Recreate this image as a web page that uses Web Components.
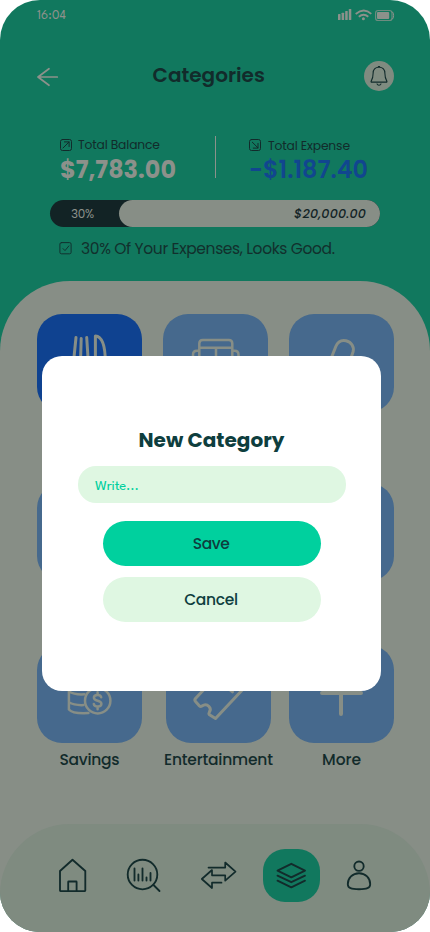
<!DOCTYPE html>
<html lang="en">
<head>
<meta charset="utf-8">
<title>Categories</title>
<style>
html,body{margin:0;background:#fff}
body{width:430px;height:932px;overflow:hidden}
</style>
</head>
<body>
<categories-screen></categories-screen>
<script>
const define = (name, html, setup) => {
  const template = document.createElement('template');
  template.innerHTML = html;
  customElements.define(name, class extends HTMLElement {
    constructor() {
      super();
      this.attachShadow({mode: 'open'}).append(template.content.cloneNode(true));
    }
    connectedCallback() { if (setup) setup(this, this.shadowRoot); }
  });
};

/* One line of text, sized (or with "tracked", letter-spaced) to fill the width given in "w". */
define('fit-text', `<style>
:host{display:block;white-space:nowrap;line-height:20px;height:20px}
span{display:inline-block;vertical-align:top}
</style><span><slot></slot></span>`, (host, root) => {
  const span = root.querySelector('span');
  const target = +host.getAttribute('w');
  host.style.width = target + 'px';
  const natural = span.getBoundingClientRect().width;
  if (host.hasAttribute('tracked')) {
    span.style.letterSpacing = ((target - natural) / (host.textContent.length - 1)).toFixed(3) + 'px';
  } else {
    const size = parseFloat(getComputedStyle(span).fontSize);
    span.style.fontSize = (size * target / natural).toFixed(2) + 'px';
  }
});

const ICONS = {
  signal: ['338 8 14 13', '<g fill="#8c918b" stroke="none"><rect x="338" y="14" width="2.5" height="6" rx=".6"/><rect x="341.6" y="12.7" width="2.5" height="7.3" rx=".6"/><rect x="345.2" y="11" width="2.5" height="9" rx=".6"/><rect x="348.8" y="9" width="2.5" height="11" rx=".6"/></g>'],
  wifi: ['355 8 18 13', '<g stroke="#8c918b" stroke-width="1.9" stroke-linecap="butt"><path d="M355.7 13.9Q364 7.3 371.3 13.9"/><path d="M358.8 16.8Q363.6 12.8 368.3 16.8"/></g><circle cx="363.4" cy="18.7" r="1.5" fill="#8c918b" stroke="none"/>'],
  battery: ['375 9 20 13', '<rect x="375.6" y="10.5" width="16.400" height="10" rx="2.6" stroke="#6d8c80" stroke-width="1.200"/><rect x="377" y="12" width="12.200" height="7" rx="1" fill="#8c918b" stroke="none"/><path d="M392.6 12q1 .8 1 3.5t-1 3.5" stroke="#8c918b" stroke-width="1"/>'],
  back: ['36 66 24 22', '<path d="M57.3 77H38M49 68.7L38 77l11 8.3" stroke="#8c918b" stroke-width="1.7"/>'],
  bell: ['364 61 30 30', '<circle cx="379" cy="76" r="15" fill="#7f8b80" stroke="none"/><path stroke-width="1.100" d="M379 67.3c-4 0-5.9 2.900-5.900 6.200 0 4.500-.8 5.800-1.900 7.600q-.5 1 .6 1h14.400q1.100 0 .6-1c-1.100-1.800-1.900-3.100-1.900-7.600 0-3.300-1.900-6.200-5.900-6.200zM378.300 66.600h1.400M377 83.900q.6 1.400 2 1.400t2-1.400"/>'],
  income: ['59 138 14 14', '<rect x="60.500" y="139.500" width="11" height="11" rx="2"/><path d="M63 148l6-6M64.400 141.900h4.700v4.700"/>'],
  expense: ['248 138 14 14', '<rect x="249.500" y="139.500" width="11" height="11" rx="2"/><path d="M252.300 142.200l5.700 5.700M258 143.400v4.700h-4.700"/>'],
  check: ['59 241 14 14', '<rect x="59.900" y="242.600" width="11.200" height="11.200" rx="1.500"/><path d="M63 248.600l2 2 3.900-4.700"/>'],
  food: ['37 314 105 97', '<g stroke-width="3"><path d="M76 337.500L73.500 362M81.200 338.500L80.500 362M86.700 337.500L88.300 362M95.400 362V336C102 336.500 105.300 345 105.300 362"/></g>'],
  transport: ['163 314 105 97', '<g stroke-width="2.500"><path d="M199.300 362V343.500q0-3.500 3.500-3.500h26q3.500 0 3.500 3.500V362M199.300 347.700h33M216 347.700V362M199 350.800h-2q-4 0-4 4V362M232.500 350.800h2q4 0 4 4V362"/></g>'],
  medicine: ['289 314 105 97', '<path stroke-width="3" d="M330.500 360l5.300-13.500c2.200-5 6-6.700 10.200-5.700 5.500 1.300 8.500 6.200 7 11.200L350.300 360"/>'],
  savings: ['37 645 105 97', '<g stroke-width="2.500"><path d="M68.900 680v29.500c2.500 3 9 4.200 19.500 3.600M68.900 691.500c4 2.500 9 3.200 15.500 2.800M68.900 702.300c4 2.400 9 3 14.500 2.800"/><circle cx="97.700" cy="700.700" r="12.700"/><path d="M101.200 697.300c-.3-1.600-1.700-2.400-3.700-2.400-2.200 0-3.600 1-3.600 2.800 0 4 7.500 2 7.500 6.100 0 1.800-1.500 2.800-3.700 2.800s-3.700-1-3.900-2.700M97.600 692.300v2.300M97.600 707v2.300"/></g>'],
  ticket: ['166 645 105 97', '<path stroke-width="3" d="M210 683L195.500 698.500q-1.300 1.700 0 3L199.500 706q1 1 2.500 0c2.500-1.700 5-1.500 7 .5s1.900 3.500.2 6q-.8 1.300.3 2.300L215.500 718.500L246 686M229 689l3.500 2.800"/>'],
  plus: ['289 645 105 97', '<path stroke-width="4" d="M322 693h39M341 673v41"/>'],
  home: ['56 856 34 38', '<path d="M60 890.600V871L72.500 859.700 85.300 871v19.600q0 .5-.5.500H60.500q-.5 0-.5-.5zM68.200 891v-9q0-.5.5-.5h7.400q.5 0 .5.500v9"/>'],
  analysis: ['125 857 37 37', '<circle cx="142.500" cy="874.500" r="14.800"/><path d="M153.500 885l6 6M134.500 868.500v12M138.400 874.500v6M142.500 868.500v12M146.500 877.500v3M150.500 873v7.500"/>'],
  transfer: ['199 860 39 31', '<path stroke-width="1.700" d="M208.500 867.600H225.200V862.500L235.500 871.600 225.200 880.700V875.300H212V870L201.800 879 212 888V882.700H221.500"/>'],
  layers: ['275 861 33 29', '<path d="M291.300 863.800l13.700 6.900-13.700 6.700-13.800-6.700zM277.500 875.600l13.800 6.600 13.700-6.600M277.500 880.700l13.800 6.600 13.700-6.600"/>'],
  profile: ['345 859 28 33', '<circle cx="359" cy="866.200" r="4.700"/><path d="M359 873.200c-6.500 0-11.200 5-11.200 11 0 4 3.500 5 11.200 5s11.200-1 11.200-5c0-6-4.700-11-11.200-11z"/>']
};

define('app-icon', `<style>:host{display:block;flex:none}svg{display:block;fill:none;stroke:currentColor;stroke-width:var(--stroke,1);stroke-linecap:round;stroke-linejoin:round}</style><svg></svg>`, (host, root) => {
  const [box, art] = ICONS[host.getAttribute('name')];
  const [, , w, h] = box.split(' ');
  const svg = root.querySelector('svg');
  svg.setAttribute('viewBox', box);
  svg.setAttribute('width', w);
  svg.setAttribute('height', h);
  svg.innerHTML = art;
});

define('status-bar', `<style>
:host{display:flex;height:32px;padding:8px 35px 0 37px;box-sizing:border-box;color:#8c918b}
fit-text{font:400 13px "League Spartan",Lato,sans-serif;line-height:16px;height:16px;margin-right:272px}
app-icon+app-icon{margin-left:3px}
app-icon[name=battery]{margin:1px 0 0 2px}
</style><fit-text w="29" tracked>16:04</fit-text><app-icon name="signal"></app-icon><app-icon name="wifi"></app-icon><app-icon name="battery"></app-icon>`);

define('top-bar', `<style>
:host{display:flex;height:30px;margin-top:29px;padding:0 36px}
app-icon[name=back]{margin-top:5px}
fit-text{font-size:20px;font-weight:600;line-height:28px;margin:0 99px 0 92.500px}
</style><app-icon name="back"></app-icon><fit-text w="112.5">Categories</fit-text><app-icon name="bell"></app-icon>`);

define('balance-stat', `<style>
:host{display:block}
div{display:flex;gap:5px;height:18px}
::slotted([slot=label]){font-size:12.300px;font-weight:400;height:14px;line-height:14px;margin-top:var(--drop,2px)}
::slotted([slot=icon]){margin-top:2px}
::slotted([slot=value]){font-size:24px;line-height:24px;height:24px;margin:4px 0 0 1px}
</style><div><slot name="icon"></slot><slot name="label"></slot></div><slot name="value"></slot>`);

define('balance-summary', `<style>
:host{display:flex;margin-top:45px;padding-left:59px;height:49px}
i{width:1px;height:42px;margin:0 32px 0 39px;background:#8c918b}
.in{color:#8c918b;font-weight:700}
.out{color:#11468f;font-weight:600}
</style>
<balance-stat><app-icon slot="icon" name="income"></app-icon><fit-text slot="label" w="82" tracked>Total Balance</fit-text><fit-text slot="value" class="in" w="116">$7,783.00</fit-text></balance-stat>
<i></i>
<balance-stat style="--drop:3px"><app-icon slot="icon" name="expense"></app-icon><fit-text slot="label" w="82" tracked style="margin-left:1px">Total Expense</fit-text><fit-text slot="value" class="out" w="119">-$1.187.40</fit-text></balance-stat>`);

define('budget-bar', `<style>
:host{display:flex;box-sizing:border-box;width:330px;height:27px;margin:15px 0 0 50px;border-radius:14px;background:#122325}
.used{width:48px;padding-left:21px;color:#8c918b;font-size:12px;font-weight:400}
.used fit-text{line-height:28px}
.rest{display:flex;justify-content:flex-end;box-sizing:border-box;width:261px;padding-right:14px;border-radius:14px;background:#878e86;font-size:12.700px;font-weight:500;font-style:italic;color:#122325}
fit-text{line-height:27px;height:27px}
</style><div class="used"><fit-text w="23" tracked>30%</fit-text></div><div class="rest"><fit-text w="72" tracked>$20,000.00</fit-text></div>`);

define('budget-note', `<style>
:host{display:flex;gap:8px;margin:12px 0 0 59px;font-size:15.500px;font-weight:400}
app-icon{margin-top:2px;opacity:.9}
fit-text{line-height:20px;color:#12302d}
</style><app-icon name="check"></app-icon><fit-text w="254" tracked>30% Of Your Expenses, Looks Good.</fit-text>`);

define('category-tile', `<style>
:host{display:block;width:105px;color:#878e86}
.tile{height:97.500px;border-radius:25px;background:var(--tile,#46698d)}
.label{display:flex;justify-content:center;width:115px;margin:7px 0 0 -5px;font-size:15.500px;font-weight:500;color:#122b2b}
</style><div class="tile"><slot name="icon"></slot></div><div class="label"><slot></slot></div>`);

define('category-panel', `<style>
:host{display:grid;box-sizing:border-box;height:651px;margin-top:22px;padding:33px 36px 0 37px;border-radius:70px 70px 0 0;background:#878e86;grid-template-rows:169px 162px 120px;align-content:start}
.row{display:flex;justify-content:space-between}
</style>
<div class="row"><category-tile style="--tile:#0f4290"><app-icon slot="icon" name="food"></app-icon></category-tile><category-tile><app-icon slot="icon" name="transport"></app-icon></category-tile><category-tile><app-icon slot="icon" name="medicine"></app-icon></category-tile></div>
<div class="row"><category-tile></category-tile><category-tile></category-tile><category-tile></category-tile></div>
<div class="row"><category-tile><app-icon slot="icon" name="savings"></app-icon><fit-text w="60" tracked>Savings</fit-text></category-tile><category-tile style="margin-left:6px"><app-icon slot="icon" name="ticket"></app-icon><fit-text w="109" tracked>Entertainment</fit-text></category-tile><category-tile><app-icon slot="icon" name="plus"></app-icon><fit-text w="39" tracked>More</fit-text></category-tile></div>`);

define('tab-bar', `<style>
:host{position:absolute;left:0;bottom:0;display:flex;align-items:flex-start;box-sizing:border-box;width:430px;height:108px;padding:25px 57px 0 56px;border-radius:70px 70px 0 0;background:#7f8b80;--stroke:1.85}
app-icon{margin-top:7px}
[name=analysis]{margin:8px 0 0 35px}
[name=transfer]{margin:11px 0 0 37px}
.active{display:grid;place-items:center;width:57px;height:53px;margin:0 25px;border-radius:22px;background:#11785e}
.active app-icon{margin:0}
[name=profile]{margin-top:10px}
</style><app-icon name="home"></app-icon><app-icon name="analysis"></app-icon><app-icon name="transfer"></app-icon><div class="active"><app-icon name="layers"></app-icon></div><app-icon name="profile"></app-icon>`);

define('pill-button', `<style>
:host{display:block}
button{display:flex;justify-content:center;align-items:center;width:218px;height:45px;padding:0 1px 0 0;border:0;border-radius:23px;background:var(--fill);color:#0e3e3e;font:inherit;font-size:15.500px;font-weight:500}
</style><button><slot></slot></button>`);

define('category-dialog', `<style>
:host{position:absolute;left:42px;top:356px;display:flex;flex-direction:column;align-items:center;box-sizing:border-box;width:339px;height:335px;padding-top:70px;border-radius:20px;background:#fff;color:#0e3e3e}
.title{font-size:20px;font-weight:700;line-height:29px;height:28px}
.field{box-sizing:border-box;width:268px;height:37px;margin:12px 0 18px 1px;padding:11px 17px;border-radius:18px;background:#dff7e2;color:#00d09e}
.field fit-text{font:400 14.500px "League Spartan",Lato,sans-serif;line-height:20px}
pill-button+pill-button{margin-top:11px}
</style><fit-text class="title" w="146">New Category</fit-text>
<div class="field"><fit-text w="44" tracked>Write...</fit-text></div>
<pill-button style="--fill:#00d09e"><fit-text w="37" tracked>Save</fit-text></pill-button>
<pill-button style="--fill:#dff7e2"><fit-text w="54" tracked>Cancel</fit-text></pill-button>`);

define('categories-screen', `<style>
:host{position:relative;display:block;width:430px;height:932px;overflow:hidden;border-radius:40px;background:#11785e;color:#122b2b;font-family:Poppins,Inter,sans-serif;font-feature-settings:"cv11"}
</style><status-bar></status-bar><top-bar></top-bar><balance-summary></balance-summary><budget-bar></budget-bar><budget-note></budget-note><category-panel></category-panel><tab-bar></tab-bar><category-dialog></category-dialog>`);
</script>
</body>
</html>
